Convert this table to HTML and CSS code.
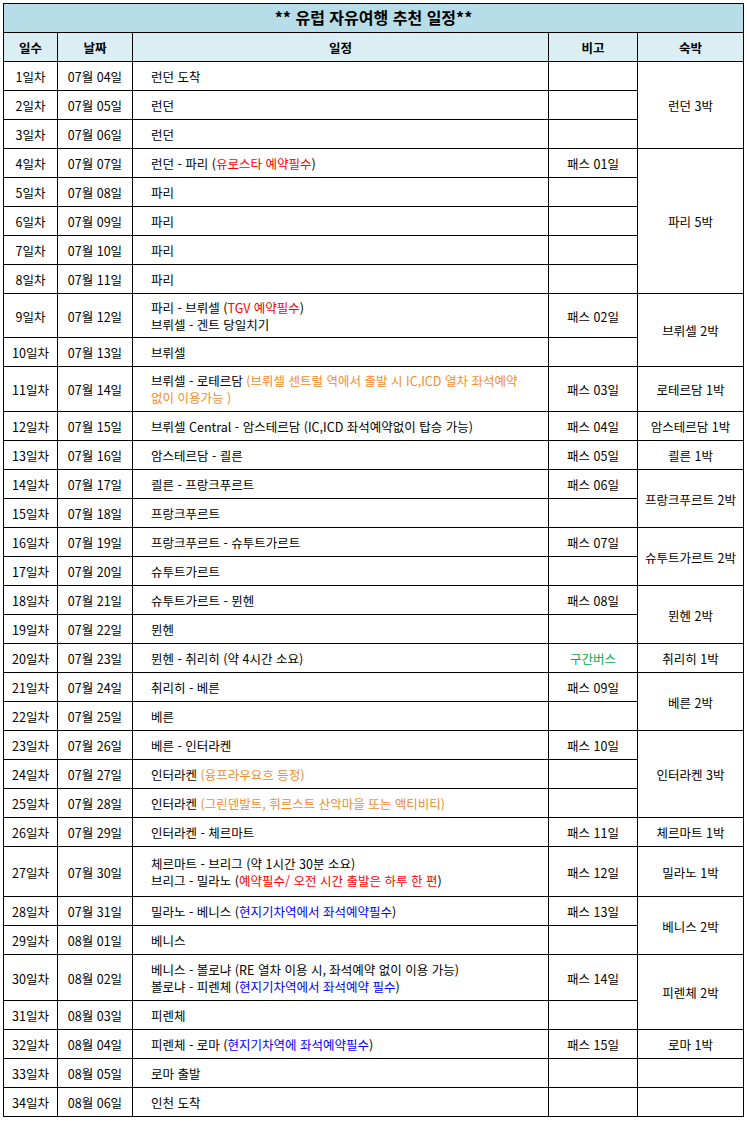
FILE: index.html
```html
<!DOCTYPE html>
<html lang="ko">
<head>
<meta charset="utf-8">
<title>유럽 자유여행 추천 일정</title>
<link rel="stylesheet" href="styles.css">
</head>
<body>
<table class="plan">
  <colgroup>
    <col class="c-day">
    <col class="c-date">
    <col class="c-plan">
    <col class="c-note">
    <col class="c-stay">
  </colgroup>
  <thead>
    <tr class="title-row"><th colspan="5">** 유럽 자유여행 추천 일정**</th></tr>
    <tr class="head-row"><th>일수</th><th>날짜</th><th>일정</th><th>비고</th><th>숙박</th></tr>
  </thead>
  <tbody>
    <tr><td>1일차</td><td>07월 04일</td><td class="plan-cell">런던 도착</td><td></td><td class="stay" rowspan="3">런던 3박</td></tr>
    <tr><td>2일차</td><td>07월 05일</td><td class="plan-cell">런던</td><td></td></tr>
    <tr><td>3일차</td><td>07월 06일</td><td class="plan-cell">런던</td><td></td></tr>
    <tr><td>4일차</td><td>07월 07일</td><td class="plan-cell">런던 - 파리 (<span class="red">유로스타 예약필수</span>)</td><td>패스 01일</td><td class="stay" rowspan="5">파리 5박</td></tr>
    <tr><td>5일차</td><td>07월 08일</td><td class="plan-cell">파리</td><td></td></tr>
    <tr><td>6일차</td><td>07월 09일</td><td class="plan-cell">파리</td><td></td></tr>
    <tr><td>7일차</td><td>07월 10일</td><td class="plan-cell">파리</td><td></td></tr>
    <tr><td>8일차</td><td>07월 11일</td><td class="plan-cell">파리</td><td></td></tr>
    <tr class="compact"><td>9일차</td><td>07월 12일</td><td class="plan-cell">파리 - 브뤼셀 (<span class="red">TGV 예약필수</span>)<br>브뤼셀 - 겐트 당일치기</td><td>패스 02일</td><td class="stay" rowspan="2">브뤼셀 2박</td></tr>
    <tr><td>10일차</td><td>07월 13일</td><td class="plan-cell">브뤼셀</td><td></td></tr>
    <tr class="snug"><td>11일차</td><td>07월 14일</td><td class="plan-cell">브뤼셀 - 로테르담 <span class="orange">(브뤼셀 센트럴 역에서 출발 시 IC,ICD 열차 좌석예약<br>없이 이용가능 )</span></td><td>패스 03일</td><td class="stay">로테르담 1박</td></tr>
    <tr><td>12일차</td><td>07월 15일</td><td class="plan-cell">브뤼셀 Central - 암스테르담 (IC,ICD 좌석예약없이 탑승 가능)</td><td>패스 04일</td><td class="stay">암스테르담 1박</td></tr>
    <tr><td>13일차</td><td>07월 16일</td><td class="plan-cell">암스테르담 - 쾰른</td><td>패스 05일</td><td class="stay">쾰른 1박</td></tr>
    <tr><td>14일차</td><td>07월 17일</td><td class="plan-cell">쾰른 - 프랑크푸르트</td><td>패스 06일</td><td class="stay" rowspan="2">프랑크푸르트 2박</td></tr>
    <tr><td>15일차</td><td>07월 18일</td><td class="plan-cell">프랑크푸르트</td><td></td></tr>
    <tr><td>16일차</td><td>07월 19일</td><td class="plan-cell">프랑크푸르트 - 슈투트가르트</td><td>패스 07일</td><td class="stay" rowspan="2">슈투트가르트 2박</td></tr>
    <tr><td>17일차</td><td>07월 20일</td><td class="plan-cell">슈투트가르트</td><td></td></tr>
    <tr><td>18일차</td><td>07월 21일</td><td class="plan-cell">슈투트가르트 - 뮌헨</td><td>패스 08일</td><td class="stay" rowspan="2">뮌헨 2박</td></tr>
    <tr><td>19일차</td><td>07월 22일</td><td class="plan-cell">뮌헨</td><td></td></tr>
    <tr><td>20일차</td><td>07월 23일</td><td class="plan-cell">뮌헨 - 취리히 (약 4시간 소요)</td><td class="green">구간버스</td><td class="stay">취리히 1박</td></tr>
    <tr><td>21일차</td><td>07월 24일</td><td class="plan-cell">취리히 - 베른</td><td>패스 09일</td><td class="stay" rowspan="2">베른 2박</td></tr>
    <tr><td>22일차</td><td>07월 25일</td><td class="plan-cell">베른</td><td></td></tr>
    <tr><td>23일차</td><td>07월 26일</td><td class="plan-cell">베른 - 인터라켄</td><td>패스 10일</td><td class="stay" rowspan="3">인터라켄 3박</td></tr>
    <tr><td>24일차</td><td>07월 27일</td><td class="plan-cell">인터라켄 <span class="orange">(융프라우요흐 등정)</span></td><td></td></tr>
    <tr><td>25일차</td><td>07월 28일</td><td class="plan-cell">인터라켄 <span class="orange">(그린덴발트, 휘르스트 산악마을 또는 액티비티)</span></td><td></td></tr>
    <tr><td>26일차</td><td>07월 29일</td><td class="plan-cell">인터라켄 - 체르마트</td><td>패스 11일</td><td class="stay">체르마트 1박</td></tr>
    <tr class="tall"><td>27일차</td><td>07월 30일</td><td class="plan-cell">체르마트 - 브리그 (약 1시간 30분 소요)<br>브리그 - 밀라노 (<span class="red">예약필수/ 오전 시간 출발은 하루 한 편</span>)</td><td>패스 12일</td><td class="stay">밀라노 1박</td></tr>
    <tr><td>28일차</td><td>07월 31일</td><td class="plan-cell">밀라노 - 베니스 (<span class="blue">현지기차역에서 좌석예약필수</span>)</td><td>패스 13일</td><td class="stay" rowspan="2">베니스 2박</td></tr>
    <tr><td>29일차</td><td>08월 01일</td><td class="plan-cell">베니스</td><td></td></tr>
    <tr><td>30일차</td><td>08월 02일</td><td class="plan-cell">베니스 - 볼로냐 (RE 열차 이용 시, 좌석예약 없이 이용 가능)<br>볼로냐 - 피렌체 (<span class="blue">현지기차역에서 좌석예약 필수</span>)</td><td>패스 14일</td><td class="stay" rowspan="2">피렌체 2박</td></tr>
    <tr><td>31일차</td><td>08월 03일</td><td class="plan-cell">피렌체</td><td></td></tr>
    <tr><td>32일차</td><td>08월 04일</td><td class="plan-cell">피렌체 - 로마 (<span class="blue">현지기차역에 좌석예약필수</span>)</td><td>패스 15일</td><td class="stay">로마 1박</td></tr>
    <tr><td>33일차</td><td>08월 05일</td><td class="plan-cell">로마 출발</td><td></td><td class="stay"></td></tr>
    <tr><td>34일차</td><td>08월 06일</td><td class="plan-cell">인천 도착</td><td></td><td class="stay"></td></tr>
  </tbody>
</table>
</body>
</html>
```

FILE: styles.css
```css
html, body {
  background: #ffffff;
}

body {
  margin: 3px;
  font-family: "Noto Sans CJK KR", "Noto Sans", sans-serif;
  font-size: 12.5px;
  color: #000000;
}

.plan {
  width: 740px;
  table-layout: fixed;
  border-collapse: collapse;
  border: 1px solid #000;
}

.c-day { width: 54px; }
.c-date { width: 75px; }
.c-plan { width: 416px; }
.c-note { width: 89px; }
.c-stay { width: 106px; }

.plan th,
.plan td {
  border: 1px solid #000;
  padding: 6px 0 5px;
  line-height: 17px;
  text-align: center;
  vertical-align: middle;
  white-space: nowrap;
}

.title-row th {
  background: #b7dde8;
  font-size: 16px;
  font-weight: 700;
  padding: 5px 0 6px;
  line-height: 17px;
}

.head-row th {
  background: #daeef3;
  font-weight: 700;
}

.plan td.plan-cell {
  text-align: left;
  padding-left: 18px;
}

.plan .compact td {
  padding-top: 5px;
  padding-bottom: 4px;
}

.plan .snug td {
  padding-top: 5px;
  padding-bottom: 5px;
}

.tall td {
  height: 38px;
}

.red { color: #ff0000; }
.orange { color: #f48b2c; }
.blue { color: #0000ff; }
.plan td.green { color: #00b050; }
```
